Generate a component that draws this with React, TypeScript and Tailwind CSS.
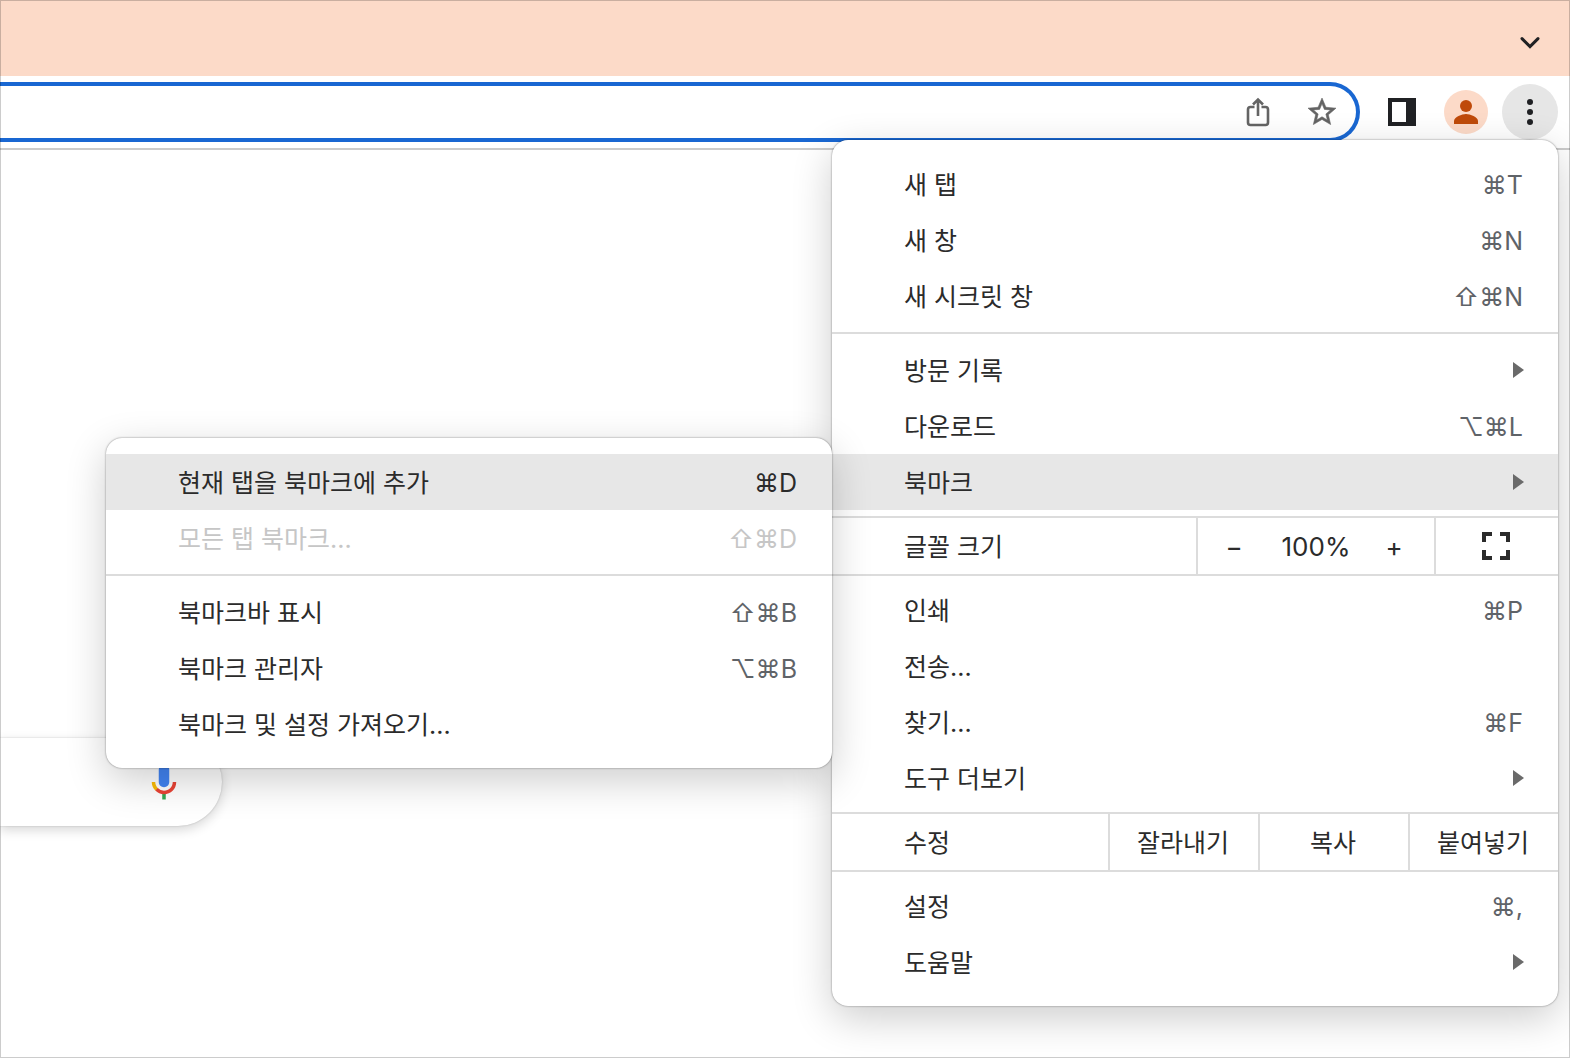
import clsx from "clsx";
import React from "react";

type Item = {
  label: string;
  keys?: string;
  more?: boolean;
  active?: boolean;
  disabled?: boolean;
};

const newItems: Item[] = [
  { label: "새 탭", keys: "⌘T" },
  { label: "새 창", keys: "⌘N" },
  { label: "새 시크릿 창", keys: "⇧⌘N" },
];

const toolItems: Item[] = [
  { label: "인쇄", keys: "⌘P" },
  { label: "전송..." },
  { label: "찾기...", keys: "⌘F" },
  { label: "도구 더보기", more: true },
];

const bookmarkItems: Item[] = [
  { label: "현재 탭을 북마크에 추가", keys: "⌘D", active: true },
  { label: "모든 탭 북마크...", keys: "⇧⌘D", disabled: true },
];

const bookmarkManageItems: Item[] = [
  { label: "북마크바 표시", keys: "⇧⌘B" },
  { label: "북마크 관리자", keys: "⌥⌘B" },
  { label: "북마크 및 설정 가져오기..." },
];

export default function App() {
  return (
    <div className="relative min-h-screen w-full overflow-hidden bg-white font-['Inter','Noto_Sans_CJK_KR',sans-serif] text-[25px] leading-8 text-[#2b2b2b]">
      <header>
        <TabStrip />
        <Toolbar />
      </header>
      <main className="pt-[588px]">
        <SearchBox />
      </main>
      <div className="absolute top-[140px] right-3 w-[726px]">
        <MainMenu />
      </div>
      {/* Window outline */}
      <div className="pointer-events-none absolute inset-0 border border-black/20" />
    </div>
  );
}

const TabStrip = () => {
  return (
    <div className="flex h-19 items-center justify-end bg-[#fcdac8] pt-2.5 pr-7">
      <button aria-label="탭 검색" className="text-[#202124]">
        <svg width="24" height="24" viewBox="0 0 24 24" fill="none">
          <path
            d="M4 7.6l8 8 8-8"
            stroke="currentColor"
            strokeWidth="3"
            strokeLinecap="round"
          />
        </svg>
      </button>
    </div>
  );
};

const Toolbar = () => {
  return (
    <div className="flex h-[74px] items-center border-b-2 border-[#cbcbcb] pr-3">
      <div className="flex h-[60px] flex-1 items-center gap-9 rounded-r-full border-4 border-l-0 border-[#1967d2] pr-5">
        <input
          aria-label="주소창"
          className="h-full min-w-0 flex-1 px-6 outline-none"
        />
        <button aria-label="공유" className="text-[#646464]">
          <svg width="28" height="30" viewBox="0 0 28 30" fill="none">
            <path
              d="M10.5 10h-4A2.5 2.5 0 0 0 4 12.5v13A2.5 2.5 0 0 0 6.5 28h15a2.5 2.5 0 0 0 2.5-2.5v-13a2.500 2.500 0 0 0-2.500-2.500h-4M14 19V3M9 7.5l5-5 5 5"
              stroke="currentColor"
              strokeWidth="2.6"
            />
          </svg>
        </button>
        <button aria-label="북마크에 추가" className="text-[#646464]">
          <svg width="28" height="28" viewBox="0 0 20 20" fill="currentColor">
            <path
              d="M20 7.240l-7.190-.620L10 0 7.190 6.630 0 7.240l5.460 4.730L3.820 19 10 15.270 16.180 19l-1.630-7.030L20 7.240zM10 13.400l-3.760 2.270 1-4.280-3.320-2.880 4.380-.380L10 4.100l1.710 4.040 4.380.380-3.320 2.880 1 4.280L10 13.400z"
              stroke="currentColor"
              strokeWidth="0.4"
            />
          </svg>
        </button>
      </div>
      <button aria-label="사이드 패널" className="ml-7 text-[#202124]">
        <svg width="28" height="28" viewBox="0 0 28 28" fill="currentColor">
          <path fillRule="evenodd" d="M0 0h28v28H0zM4 4v20h14V4z" />
        </svg>
      </button>
      <button
        aria-label="프로필"
        className="ml-7 flex size-11 items-center justify-center rounded-full bg-[#fcdac8] text-[#bf4a0a]"
      >
        <svg width="24" height="24" viewBox="0 0 24 24" fill="currentColor">
          <circle cx="12" cy="6" r="6" />
          <path d="M0 24v-3c0-4 8-7 12-7s12 3 12 7v3z" />
        </svg>
      </button>
      <button
        aria-label="Chrome 맞춤설정 및 제어"
        className="ml-3.5 flex size-14 items-center justify-center rounded-full bg-[#e6e6e6] text-[#202124]"
      >
        <svg width="8" height="28" viewBox="0 0 8 28" fill="currentColor">
          <circle cx="4" cy="4" r="3" />
          <circle cx="4" cy="14" r="3" />
          <circle cx="4" cy="24" r="3" />
        </svg>
      </button>
    </div>
  );
};

const SearchBox = () => {
  return (
    <div className="flex h-[88px] w-[222px] items-center rounded-r-full bg-white pr-[37px] shadow-[0_0_2px_rgba(0,0,0,0.2),0_4px_12px_rgba(0,0,0,0.16)]">
      <input
        aria-label="Google 검색"
        className="h-full min-w-0 flex-1 px-4 outline-none"
      />
      <button aria-label="음성 검색">
        <svg width="42" height="42" viewBox="0 0 24 24">
          <path
            fill="#4285f4"
            d="M12 15c1.660 0 3-1.310 3-2.970V5.010C15 3.350 13.660 2 12 2S9 3.340 9 5.010v7.020C9 13.690 10.340 15 12 15z"
          />
          <path fill="#34a853" d="M11 18.080h2V22h-2z" />
          <path
            fill="#fbbc04"
            d="M7.050 16.870C5.780 15.540 5 14.040 5 12h2c0 1.450.560 2.420 1.470 3.380v.320l-1.150 1.180z"
          />
          <path
            fill="#ea4335"
            d="M12 16.930a4.970 5.250 0 0 1-3.540-1.550l-1.410 1.490C8.310 18.210 10.070 19 12 19c3.870 0 6.990-2.920 6.990-7H17c0 2.920-2.240 4.930-5 4.930z"
          />
        </svg>
      </button>
    </div>
  );
};

const MenuPanel = ({ children }: { children: React.ReactNode }) => {
  return (
    <div
      role="menu"
      className="flex w-full flex-col rounded-2xl bg-white py-4 shadow-[0_0_2px_rgba(0,0,0,0.5),0_12px_40px_rgba(0,0,0,0.2)]"
    >
      {children}
    </div>
  );
};

const MenuItem = ({ item }: { item: Item }) => {
  return (
    <button
      role="menuitem"
      disabled={item.disabled}
      className={clsx(
        "flex h-14 w-full items-center justify-between pl-18 text-left",
        item.more ? "pr-[34px]" : "pr-[35px]",
        item.active && "bg-[#e7e7e7]",
        item.disabled && "text-[#c6c6c6]",
      )}
    >
      <span className="pt-px">{item.label}</span>
      {item.keys && (
        <kbd
          className={clsx(
            "pt-0.5 font-['Inter',sans-serif]",
            !item.active && !item.disabled && "text-[#5f6368]",
          )}
        >
          {item.keys}
        </kbd>
      )}
      {item.more && (
        <svg width="11" height="16" viewBox="0 0 11 16" fill="#6a6a6a">
          <path d="M0 0l11 8-11 8z" />
        </svg>
      )}
    </button>
  );
};

const MenuItems = ({ items }: { items: Item[] }) => {
  return items.map((item) => <MenuItem key={item.label} item={item} />);
};

const Separator = () => <div role="separator" className="my-2 h-0.5 bg-[#dcdcdc]" />;

const ButtonRow = ({
  label,
  children,
}: {
  label: string;
  children: React.ReactNode;
}) => {
  return (
    <div
      role="group"
      aria-label={label}
      className="my-1.5 flex h-[60px] border-y-2 border-[#dcdcdc]"
    >
      <span className="flex flex-1 items-center pt-px pl-18">{label}</span>
      {children}
    </div>
  );
};

const MainMenu = () => {
  return (
    <MenuPanel>
      <MenuItems items={newItems} />
      <Separator />
      <MenuItem item={{ label: "방문 기록", more: true }} />
      <MenuItem item={{ label: "다운로드", keys: "⌥⌘L" }} />
      <div className="relative">
        <MenuItem item={{ label: "북마크", more: true, active: true }} />
        <div className="absolute -top-4 right-full w-full">
          <BookmarkMenu />
        </div>
      </div>
      <ButtonRow label="글꼴 크기">
        <div className="flex items-center border-l-2 border-[#dcdcdc] pt-0.5 pr-2 text-[26px]">
          <button aria-label="축소" className="h-full w-18">
            −
          </button>
          <span className="w-[92px] text-center">100%</span>
          <button aria-label="확대" className="h-full w-16">
            +
          </button>
        </div>
        <button
          aria-label="전체화면"
          className="flex w-[124px] items-center justify-center border-l-2 border-[#dcdcdc] pr-0.5"
        >
          <svg width="28" height="28" viewBox="0 0 28 28" fill="none">
            <path
              d="M2 10V2h8M18 2h8v8M26 18v8h-8M10 26H2v-8"
              stroke="currentColor"
              strokeWidth="4"
            />
          </svg>
        </button>
      </ButtonRow>
      <MenuItems items={toolItems} />
      <ButtonRow label="수정">
        {["잘라내기", "복사", "붙여넣기"].map((label) => (
          <button
            key={label}
            className="w-[150px] border-l-2 border-[#dcdcdc] pt-px pr-0.5 text-center"
          >
            {label}
          </button>
        ))}
      </ButtonRow>
      <MenuItem item={{ label: "설정", keys: "⌘," }} />
      <MenuItem item={{ label: "도움말", more: true }} />
    </MenuPanel>
  );
};

const BookmarkMenu = () => {
  return (
    <MenuPanel>
      <MenuItems items={bookmarkItems} />
      <Separator />
      <MenuItems items={bookmarkManageItems} />
    </MenuPanel>
  );
};
